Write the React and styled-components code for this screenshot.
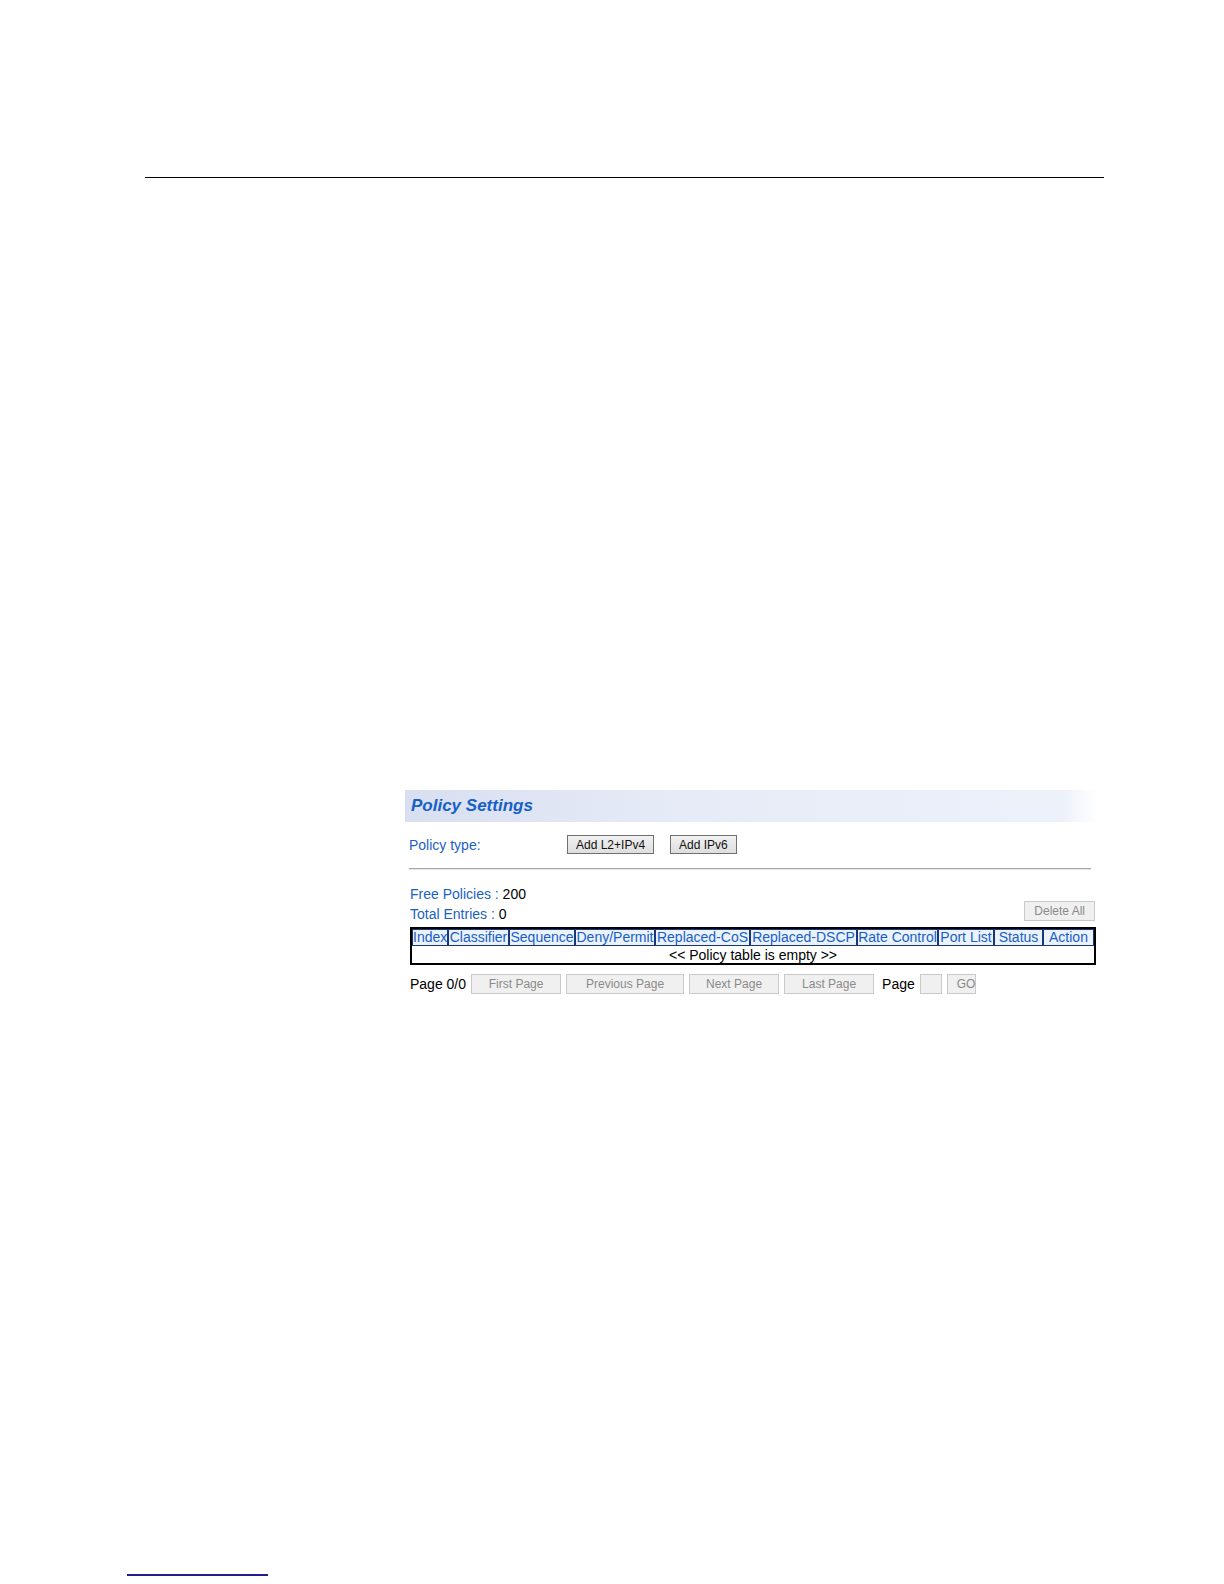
import React from 'react';
import styled, { createGlobalStyle } from 'styled-components';

const GlobalStyle = createGlobalStyle`
  html, body {
    margin: 0;
    padding: 0;
    background: #fff;
    overflow: hidden;
  }
  body {
    font-family: "Liberation Sans", Arial, sans-serif;
  }
`;

const columns = [
  { label: 'Index', width: 36 },
  { label: 'Classifier', width: 61 },
  { label: 'Sequence', width: 66 },
  { label: 'Deny/Permit', width: 80 },
  { label: 'Replaced-CoS', width: 95 },
  { label: 'Replaced-DSCP', width: 107 },
  { label: 'Rate Control', width: 81 },
  { label: 'Port List', width: 56 },
  { label: 'Status', width: 49 },
  { label: 'Action', width: 51 },
];

const App = () => {
  return (
    <Page>
      <GlobalStyle />
      <TopRule />
      <Panel>
        <TitleBar>
          <Title>Policy Settings</Title>
        </TitleBar>
        <TypeRow>
          <Label>Policy type:</Label>
          <Button>Add L2+IPv4</Button>
          <Button>Add IPv6</Button>
        </TypeRow>
        <Divider />
        <StatsRow>
          <Stats>
            <StatLine><Label>Free Policies : </Label>200</StatLine>
            <StatLine><Label>Total Entries : </Label>0</StatLine>
          </Stats>
          <GhostButton disabled>Delete All</GhostButton>
        </StatsRow>
        <Table>
          <colgroup>
            {columns.map(c => <col key={c.label} style={{ width: c.width }} />)}
          </colgroup>
          <thead>
            <tr>
              {columns.map(c => <Th key={c.label}>{c.label}</Th>)}
            </tr>
          </thead>
          <tbody>
            <tr>
              <EmptyCell colSpan={columns.length}>&lt;&lt; Policy table is empty &gt;&gt;</EmptyCell>
            </tr>
          </tbody>
        </Table>
        <Pager>
          <PagerText>Page 0/0</PagerText>
          <GhostButton disabled $w={90}>First Page</GhostButton>
          <GhostButton disabled $w={118}>Previous Page</GhostButton>
          <GhostButton disabled $w={90}>Next Page</GhostButton>
          <GhostButton disabled $w={90}>Last Page</GhostButton>
          <PagerText $pad>Page</PagerText>
          <PageInput />
          <GhostButton disabled $w={29}>GO</GhostButton>
        </Pager>
      </Panel>
      <FootRule />
    </Page>
  );
};

export default App;

const Page = styled.div`
  height: 100vh;
  display: flex;
  flex-direction: column;
  box-sizing: border-box;
  padding-top: 177px;
`;

const TopRule = styled.div`
  margin-left: 145px;
  width: 959px;
  height: 1px;
  background: #000;
`;

const Panel = styled.div`
  margin-top: 612px;
  margin-left: 405px;
  width: 693px;
  display: flex;
  flex-direction: column;
`;

const TitleBar = styled.div`
  height: 32px;
  display: flex;
  align-items: center;
  padding-left: 6px;
  background: linear-gradient(90deg, #d8dff0 0%, #e6ebf7 40%, #edf1fa 95%, #ffffff 100%);
`;

const Title = styled.h2`
  margin: 0;
  font-size: 17px;
  font-weight: bold;
  font-style: italic;
  color: #1660c6;
`;

const Label = styled.span`
  color: #1a62c0;
`;

const TypeRow = styled.div`
  display: flex;
  align-items: center;
  margin-top: 13px;
  padding-left: 4px;
  font-size: 14px;
  height: 19px;

  & > ${Label} {
    width: 158px;
  }

  & > button + button {
    margin-left: 16px;
  }
`;

const Button = styled.button`
  height: 19px;
  padding: 0 8px;
  font-family: "Liberation Sans", Arial, sans-serif;
  font-size: 12px;
  color: #111;
  background: linear-gradient(#f2f2f2, #dedede);
  border: 1px solid #707070;
  border-radius: 0;
`;

const Divider = styled.div`
  margin: 14px 7px 0 4px;
  height: 1px;
  background: #a8a8a8;
  border-bottom: 1px solid #e6e6e6;
`;

const StatsRow = styled.div`
  display: flex;
  align-items: flex-end;
  justify-content: space-between;
  margin-top: 14px;
  padding-left: 5px;
  padding-right: 3px;
`;

const Stats = styled.div`
  display: flex;
  flex-direction: column;
`;

const StatLine = styled.div`
  font-size: 14px;
  line-height: 20px;
  color: #000;
`;

const GhostButton = styled.button`
  height: 20px;
  width: ${p => (p.$w ? `${p.$w}px` : 'auto')};
  padding: 0 9px;
  margin-bottom: ${p => (p.$w ? '0' : '3px')};
  font-family: "Liberation Sans", Arial, sans-serif;
  font-size: 12px;
  color: #8a8a8a;
  background: #f0f0f0;
  border: 1px solid #c9c9c9;
  border-radius: 0;
`;

const Table = styled.table`
  margin-top: 3px;
  margin-left: 5px;
  width: 686px;
  table-layout: fixed;
  border-collapse: separate;
  border-spacing: 0;
  border: 2px solid #000;
  font-size: 14px;
`;

const Th = styled.th`
  height: 15px;
  padding: 0;
  font-weight: normal;
  color: #1a5ec4;
  background: #eaf2fc;
  border: 1px solid #16387a;
  white-space: nowrap;
  overflow: hidden;
  text-align: center;
  line-height: 15px;
`;

const EmptyCell = styled.td`
  height: 17px;
  padding: 0;
  text-align: center;
  color: #000;
  line-height: 16px;
`;

const Pager = styled.div`
  display: flex;
  align-items: center;
  gap: 5px;
  margin-top: 9px;
  padding-left: 5px;
`;

const PagerText = styled.span`
  font-size: 14px;
  color: #000;
  margin-left: ${p => (p.$pad ? '3px' : '0')};
`;

const PageInput = styled.input`
  width: 22px;
  height: 20px;
  box-sizing: border-box;
  padding: 0;
  border: 1px solid #c9c9c9;
  background: #f0f0f0;
`;

const FootRule = styled.div`
  margin-top: auto;
  margin-bottom: 8px;
  margin-left: 127px;
  width: 141px;
  height: 2px;
  background: #1f1f8c;
`;
